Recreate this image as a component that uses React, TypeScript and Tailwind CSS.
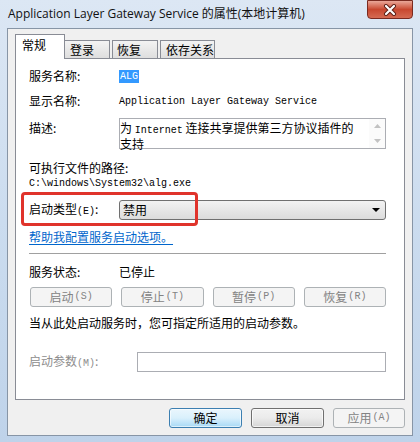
import React from 'react';

const mono = "font-['Liberation_Mono','Noto_Sans_CJK_SC',monospace] text-[10px]";

const Label: React.FC<{ children: React.ReactNode; grey?: boolean }> = ({ children, grey }) => (
  <div className={`w-[90px] shrink-0 leading-[16px] ${grey ? 'text-[#8d8d8d]' : ''}`}>{children}</div>
);

const DisabledButton: React.FC<{ text: string; hotkey: string }> = ({ text, hotkey }) => (
  <div className="h-[20px] rounded-[3px] border border-[#adb2b5] bg-[#f4f4f4] flex items-center justify-center text-[#838383] leading-none">
    {text}
    <span className={`${mono} ml-px`}>({hotkey})</span>
  </div>
);

const App: React.FC = () => {
  return (
    <div className="w-[420px] h-[442px] relative overflow-hidden bg-linear-to-b from-[#dce7f4] via-[#cbdcef] to-[#bfd3ea] font-['Noto_Sans_CJK_SC',sans-serif] text-[12px] text-black">
      {/* title bar */}
      <div className="h-[28px] flex items-center pl-[8px] text-[12px] font-['Open_Sans','Noto_Sans_CJK_SC',sans-serif] text-[#111]">
        Application Layer Gateway Service 的属性(本地计算机)
      </div>
      <div className="absolute right-[7px] top-0 w-[46px] h-[19px] rounded-b-[4px] border border-[#7a2a20] bg-linear-to-b from-[#e9a698] via-[#c8472f] to-[#d56a52] flex items-center justify-center">
        <svg width="14" height="12" viewBox="0 0 14 12">
          <path d="M3 2 L11 10 M11 2 L3 10" stroke="#5a1d14" strokeWidth="4" strokeLinecap="round" />
          <path d="M3 2 L11 10 M11 2 L3 10" stroke="#ffffff" strokeWidth="2.2" strokeLinecap="round" />
        </svg>
      </div>

      {/* client area */}
      <div className="mx-[7px] h-[408px] bg-[#f0f0f0] border border-[#8795a6]">
        {/* tabs */}
        <div className="h-[29px] flex items-end pl-[7px]">
          <div className="relative z-10 -mb-px w-[50px] h-[25px] bg-white border border-b-0 border-[#898c95] pl-[6px] pt-[2px] leading-[16px]">常规</div>
          <div className="w-[45px] h-[18px] bg-linear-to-b from-[#f3f3f3] to-[#dedede] border border-b-0 border-l-0 border-[#898c95] pl-[5px] leading-[17px]">登录</div>
          <div className="ml-[2px] w-[46px] h-[18px] bg-linear-to-b from-[#f3f3f3] to-[#dedede] border border-b-0 border-[#898c95] pl-[4px] leading-[17px]">恢复</div>
          <div className="ml-[2px] w-[55px] h-[18px] bg-linear-to-b from-[#f3f3f3] to-[#dedede] border border-b-0 border-[#898c95] pl-[5px] leading-[17px]">依存关系</div>
        </div>

        {/* panel */}
        <div className="mx-[7px] h-[342px] bg-white border border-[#898c95] pl-[13px] pr-[18px] pt-[9px]">
          <div className="flex h-[16px] items-center">
            <Label>服务名称:</Label>
            <span className={`${mono} bg-[#3399ff] text-white px-px leading-[13px]`}>ALG</span>
          </div>

          <div className="flex h-[16px] items-center mt-[9px]">
            <Label>显示名称:</Label>
            <span className={mono}>Application Layer Gateway Service</span>
          </div>

          <div className="flex mt-[9px]">
            <div className="pt-[2px]"><Label>描述:</Label></div>
            <div className="flex-1 h-[31px] border border-[#abadb3] flex">
              <div className="flex-1 leading-[13px] pt-[2px]">
                为 <span className={mono}>Internet</span> 连接共享提供第三方协议插件的<br />支持
              </div>
              <div className="w-[16px] flex flex-col items-center justify-between py-[5px] bg-[#fbfbfb]">
                <svg width="7" height="4" viewBox="0 0 7 4"><path d="M0 4 L3.5 0 L7 4 Z" fill="#c2c2c2" /></svg>
                <svg width="7" height="4" viewBox="0 0 7 4"><path d="M0 0 L3.5 4 L7 0 Z" fill="#c2c2c2" /></svg>
              </div>
            </div>
          </div>

          <div className="mt-[11px] leading-[16px]">可执行文件的路径:</div>
          <div className={`${mono} leading-[16px]`}>C:\windows\System32\alg.exe</div>

          <div className="relative flex items-center mt-[8px] h-[20px]">
            <div className="absolute -left-[8px] -top-[8px] w-[177px] h-[34px] border-[3px] border-[#e0332b] rounded-[4px]" />
            <Label>
              启动类型<span className={mono}>(E)</span>:
            </Label>
            <div className="flex-1 h-[20px] rounded-[3px] border border-[#707070] bg-linear-to-b from-[#f2f2f2] to-[#dcdcdc] flex items-center pl-[3px] pr-[5px]">
              <span className="flex-1 leading-none">禁用</span>
              <svg width="8" height="4" viewBox="0 0 8 4"><path d="M0 0 L8 0 L4 4 Z" fill="#000" /></svg>
            </div>
          </div>

          <div className="mt-[9px] leading-[16px] text-[#0066cc] underline underline-offset-2">帮助我配置服务启动选项。</div>

          <div className="mt-[8px] h-px bg-[#a0a0a0]" />

          <div className="flex h-[16px] items-center mt-[10px]">
            <Label>服务状态:</Label>
            <span>已停止</span>
          </div>

          <div className="grid grid-cols-4 gap-[9px] mt-[7px] pl-px">
            <DisabledButton text="启动" hotkey="S" />
            <DisabledButton text="停止" hotkey="T" />
            <DisabledButton text="暂停" hotkey="P" />
            <DisabledButton text="恢复" hotkey="R" />
          </div>

          <div className="mt-[8px] leading-[16px]">当从此处启动服务时，您可指定所适用的启动参数。</div>

          <div className="flex items-center mt-[21px]">
            <div className="w-[108px] shrink-0 leading-[16px] text-[#8d8d8d]">
              启动参数<span className={mono}>(M)</span>:
            </div>
            <div className="flex-1 h-[20px] border border-[#abadb3] bg-white" />
          </div>
        </div>

        {/* bottom buttons */}
        <div className="flex justify-end gap-[9px] pr-[7px] mt-[8px]">
          <div className="w-[73px] h-[20px] rounded-[3px] border border-[#3c7fb1] bg-linear-to-b from-[#eaf6fd] via-[#d9f0fc] to-[#a7d9f5] flex items-center justify-center leading-none shadow-[inset_0_0_0_1px_#ffffff99]">确定</div>
          <div className="w-[73px] h-[20px] rounded-[3px] border border-[#707070] bg-linear-to-b from-[#f2f2f2] via-[#ebebeb] to-[#d5d5d5] flex items-center justify-center leading-none shadow-[inset_0_0_0_1px_#ffffffaa]">取消</div>
          <div className="w-[72px] h-[20px] rounded-[3px] border border-[#adb2b5] bg-[#f4f4f4] flex items-center justify-center leading-none text-[#838383]">
            应用<span className={`${mono} ml-px`}>(A)</span>
          </div>
        </div>
      </div>
    </div>
  );
};

export default App;
